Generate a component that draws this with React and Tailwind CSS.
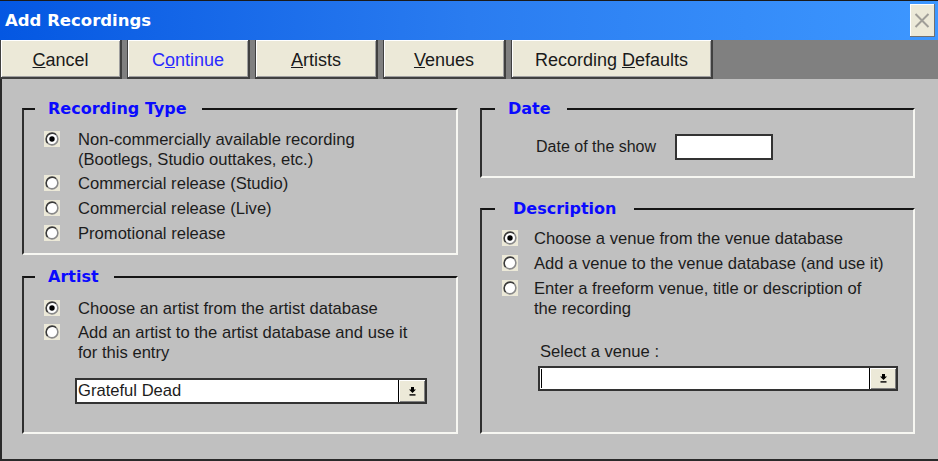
import React from "react";

const Radio = ({ checked }) => (
  <svg width="16" height="16" viewBox="0 0 16 16" className="shrink-0 mt-[1px]">
    <rect width="16" height="16" fill="#ece9d8" />
    <circle cx="8" cy="8" r="6" fill="#fff" />
    <path d="M3.76 12.24 A6 6 0 0 1 12.24 3.76" fill="none" stroke="#3a3a3a" strokeWidth="1.6" />
    <path d="M12.24 3.76 A6 6 0 0 1 3.76 12.24" fill="none" stroke="#8a8a8a" strokeWidth="1.6" />
    {checked && <circle cx="8" cy="8" r="2.7" fill="#000" />}
  </svg>
);

const Option = ({ checked, children, className, textGap }) => (
  <div className={`flex items-start ${className}`}>
    <Radio checked={checked} />
    <span className={`${textGap} leading-[20px] text-[16.6px]`}>{children}</span>
  </div>
);

const DropBtn = () => (
  <div className="w-[27px] h-full shrink-0 bg-[#ece9d8] border-l border-l-black shadow-[inset_1px_1px_0_#fff,inset_-1px_-1px_0_#808080] flex items-center justify-center">
    <svg width="7" height="9" viewBox="0 0 7 9">
      <polygon points="2,0 5,0 5,2.5 7,2.5 3.5,6 0,2.5 2,2.5" fill="#000" />
      <rect x="0.5" y="7.2" width="6" height="1.4" fill="#000" />
    </svg>
  </div>
);

const Legend = ({ children, className }) => (
  <legend
    className={`${className} leading-[20px] text-[16px] font-bold text-[#0a0aff]`}
    style={{ fontFamily: '"DejaVu Sans", sans-serif' }}
  >
    {children}
  </legend>
);

const boxCls =
  "border-t-2 border-l-2 border-r-2 border-b-2 border-t-[#151515] border-l-[#2e2e2e] border-r-[#f7f7f2] border-b-[#f7f7f2] p-0 m-0";

const ToolButton = ({ w, children, blue }) => (
  <button
    className={`${w} h-full shrink-0 bg-[#ece9d8] border-l border-l-[#404040] border-r-2 border-r-[#404040] border-b-2 border-b-[#404040] shadow-[inset_1px_1px_0_#fff,inset_-1px_-1px_0_#a0a0a0] text-[18px] pt-[3px] flex items-center justify-center ${blue ? "text-[#2a2aff]" : "text-[#1a1a1a]"}`}
  >
    {children}
  </button>
);

export default function App() {
  return (
    <div
      className="w-[938px] h-[461px] overflow-hidden bg-[#c0c0c0] text-[#1c1c1c] text-[16px] flex flex-col"
      style={{ fontFamily: '"Liberation Sans", Arial, sans-serif' }}
    >
      {/* Title bar */}
      <div className="h-[40px] shrink-0 border-t border-t-[#1a1a1a] bg-gradient-to-r from-[#0457e2] via-[#2a7cf0] to-[#3d97ff] flex items-start justify-between">
        <div
          className="ml-[5px] h-[39px] pt-[2px] flex items-center text-white font-bold text-[16.5px]"
          style={{ fontFamily: '"DejaVu Sans", sans-serif' }}
        >
          Add Recordings
        </div>
        <div className="mt-[3px] mr-[3px] w-[25px] h-[33px] bg-[#ece9d8] border-r border-b border-r-[#707070] border-b-[#707070] shadow-[inset_1px_1px_0_#fff] flex items-center justify-center">
          <svg width="16" height="15" viewBox="0 0 16 15">
            <path d="M1.5 1 L14.5 14 M14.5 1 L1.5 14" stroke="#a09e98" strokeWidth="2" fill="none" />
          </svg>
        </div>
      </div>

      {/* Toolbar */}
      <div className="h-[39px] shrink-0 bg-[#808080] flex gap-[5px]">
        <ToolButton w="w-[122px]">
          <span>
            <u>C</u>ancel
          </span>
        </ToolButton>
        <ToolButton w="w-[123px]" blue>
          <span>
            C<u>o</u>ntinue
          </span>
        </ToolButton>
        <ToolButton w="w-[123px]">
          <span>
            <u>A</u>rtists
          </span>
        </ToolButton>
        <ToolButton w="w-[123px]">
          <span>
            <u>V</u>enues
          </span>
        </ToolButton>
        <ToolButton w="w-[202px]">
          <span>
            Recording <u>D</u>efaults
          </span>
        </ToolButton>
      </div>

      {/* Main */}
      <div className="flex-1 border-l-2 border-l-[#2a2a2a] border-b-2 border-b-[#2a2a2a] pt-[20px] pl-[20px] flex gap-[22px]">
        {/* Left column */}
        <div className="w-[436px] flex flex-col gap-[12px]">
          <fieldset className={`${boxCls} h-[156px]`}>
            <Legend className="ml-[11px] pl-[13px] pr-[15px]">Recording Type</Legend>
            <div className="pt-[11px] pl-[20px] flex flex-col">
              <Option checked textGap="ml-[18px]" className="">
                Non-commercially available recording
                <br />
                (Bootlegs, Studio outtakes, etc.)
              </Option>
              <Option textGap="ml-[18px]" className="mt-[4px]">
                Commercial release (Studio)
              </Option>
              <Option textGap="ml-[18px]" className="mt-[5px]">
                Commercial release (Live)
              </Option>
              <Option textGap="ml-[18px]" className="mt-[5px]">
                Promotional release
              </Option>
            </div>
          </fieldset>

          <fieldset className={`${boxCls} h-[167px]`}>
            <Legend className="ml-[11px] pl-[13px] pr-[15px]">Artist</Legend>
            <div className="pt-[12px] pl-[20px] flex flex-col">
              <Option checked textGap="ml-[18px]">
                Choose an artist from the artist database
              </Option>
              <Option textGap="ml-[18px]" className="mt-[4px]">
                Add an artist to the artist database and use it
                <br />
                for this entry
              </Option>
              <div className="mt-[15px] ml-[31px] w-[352px] h-[26px] border-2 border-[#333] bg-white flex">
                <div className="flex-1 pl-[1px] leading-[22px] text-[16.6px]">Grateful Dead</div>
                <DropBtn />
              </div>
            </div>
          </fieldset>
        </div>

        {/* Right column */}
        <div className="w-[435px] flex flex-col gap-[21px]">
          <fieldset className={`${boxCls} h-[79px]`}>
            <Legend className="ml-[13px] pl-[13px] pr-[16px]">Date</Legend>
            <div className="pt-[15px] pl-[54px] flex items-center">
              <span className="leading-[20px]">Date of the show</span>
              <div className="ml-[19px] w-[98px] h-[26px] bg-white border-2 border-[#333]" />
            </div>
          </fieldset>

          <fieldset className={`${boxCls} h-[235px]`}>
            <Legend className="ml-[13px] pl-[18px] pr-[18px]">Description</Legend>
            <div className="pt-[10px] pl-[20px] flex flex-col">
              <Option checked textGap="ml-[16px]">
                Choose a venue from the venue database
              </Option>
              <Option textGap="ml-[16px]" className="mt-[5px]">
                Add a venue to the venue database (and use it)
              </Option>
              <Option textGap="ml-[16px]" className="mt-[5px]">
                Enter a freeform venue, title or description of
                <br />
                the recording
              </Option>
              <div className="mt-[23px] ml-[38px] leading-[20px] text-[16.6px]">Select a venue :</div>
              <div className="mt-[4px] ml-[36px] w-[360px] h-[25px] border-2 border-[#333] bg-white flex">
                <div className="flex-1 flex items-center pl-[1px]">
                  <span className="w-px h-[19px] bg-black" />
                </div>
                <DropBtn />
              </div>
            </div>
          </fieldset>
        </div>
      </div>
    </div>
  );
}
